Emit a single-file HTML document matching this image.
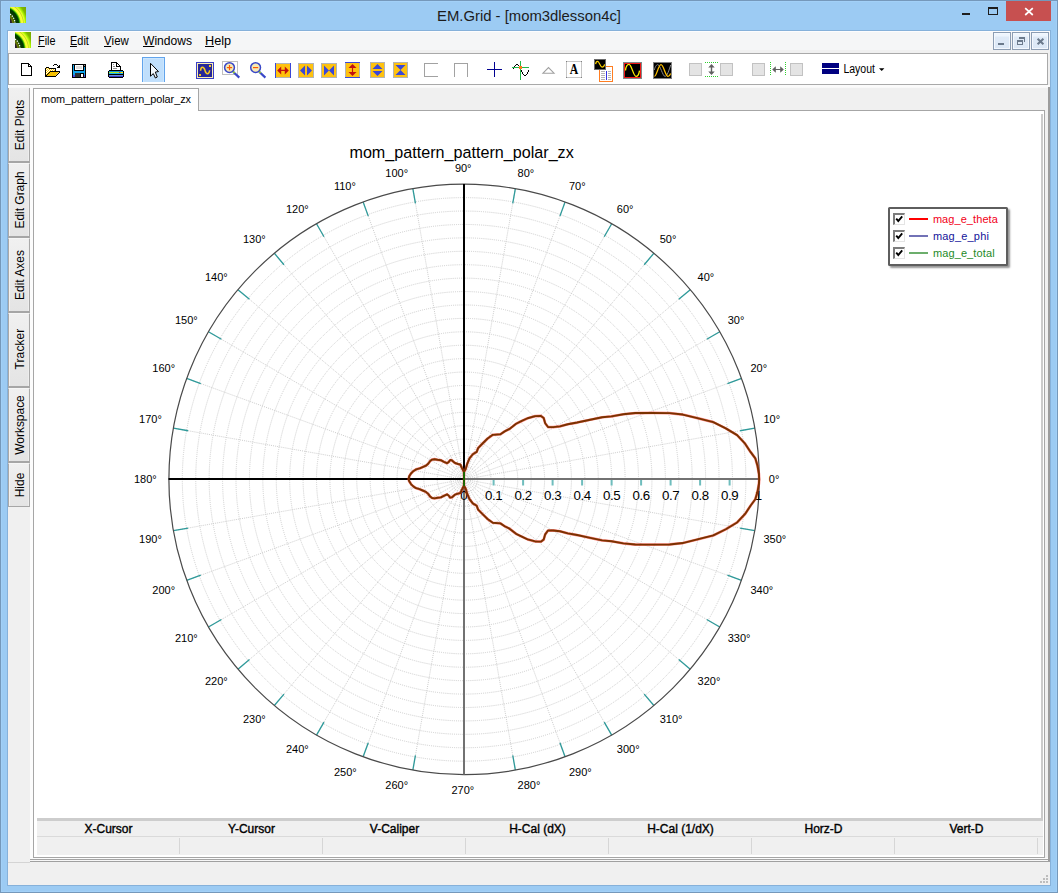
<!DOCTYPE html>
<html>
<head>
<meta charset="utf-8">
<title>EM.Grid - [mom3dlesson4c]</title>
<style>
html,body{margin:0;padding:0;}
body{width:1058px;height:893px;overflow:hidden;position:relative;background:#9ccbf3;font-family:"Liberation Sans",sans-serif;font-size:12px;color:#000;}
div,span,svg{box-sizing:border-box;}
.abs{position:absolute;}
#frame{position:absolute;left:0;top:0;width:1058px;height:893px;border:1px solid #7598ba;box-shadow:inset 0 0 0 1px #a2d0f7;}
#client{position:absolute;left:8px;top:31px;width:1042px;height:854px;background:#f0f0f0;}
#title{position:absolute;left:0;top:4.5px;width:1058px;text-align:center;font-size:14.85px;line-height:22px;color:#1c1c1c;}
#closebtn{position:absolute;left:1006px;top:1px;width:45px;height:20px;background:#c75050;}
#menubar{position:absolute;left:8px;top:31px;width:1042px;height:19px;background:#f5f6f7;box-shadow:inset 1px 1px 0 #fdfdfe;}
.menu{position:absolute;top:33px;font-size:12.7px;line-height:16px;color:#000;transform-origin:left center;white-space:nowrap;}
.menu u{text-decoration:none;display:inline-block;height:13px;border-bottom:1px solid #000;}
.mdib{position:absolute;top:32px;width:18px;height:18px;background:linear-gradient(#eef5fd 0,#eef5fd 3px,#dfeaf7 4px,#dce8f6 100%);border:1px solid #8c9db3;box-shadow:inset 0 0 0 1px #f3f8fe;}
#toolbar{position:absolute;left:8px;top:53px;width:1040px;height:32px;background:#fff;border:1px solid #a9a9a9;border-width:1px 1px 1px 1px;}
.vtab{position:absolute;left:8px;width:22px;background:linear-gradient(to bottom,#f0f0f0,#e4e4e4);border-top:1px solid #f6f6f6;border-right:1px solid #a9a9a9;border-bottom:2px solid #a6a6a6;border-left:1px solid #a9a9a9;box-shadow:inset 1px 0 0 #f2f2f2,inset -1px 0 0 #ededed;}
.vtab span{position:absolute;left:calc(50% + 0.3px);top:50%;white-space:nowrap;font-size:13.5px;letter-spacing:0px;transform:translate(-50%,-50%) rotate(-90deg) scaleX(0.885);}
#tabpage{position:absolute;left:33px;top:110px;width:1012px;height:748px;background:#fff;border:1px solid #a6a6a6;}
#tab{position:absolute;left:33px;top:88px;width:166px;height:23px;background:#fff;border:1px solid #a6a6a6;border-bottom:none;}
#tab span{position:absolute;left:7px;top:3px;font-size:10.9px;letter-spacing:-0.05px;line-height:14px;white-space:nowrap;}
#stat{position:absolute;left:37px;top:818px;width:1006px;height:37px;background:#f0f0f0;}
.sh{position:absolute;top:822px;height:15px;font-size:12px;font-weight:normal;-webkit-text-stroke:0.38px #000;text-align:center;line-height:15px;white-space:nowrap;}
.sh span{display:inline-block;}
.sd{position:absolute;top:838px;width:1px;height:16px;background:#d6d6d6;}
#legend{position:absolute;left:888px;top:207px;width:120px;height:59px;background:#fff;border:2px solid #5e5e5e;border-radius:1.5px;box-shadow:2px 2px 2px rgba(0,0,0,0.42);}
.lg{position:absolute;left:42.9px;font-size:11px;line-height:13px;white-space:nowrap;}
.cb{position:absolute;left:3px;width:12px;height:12px;background:#fff;border-top:2px solid #7c7c7c;border-left:2px solid #7c7c7c;border-right:1px solid #e4e4e4;border-bottom:1px solid #e4e4e4;}
.cb svg{position:absolute;left:0;top:0;}
.ln{position:absolute;left:19px;width:19px;height:2px;}
</style>
</head>
<body>
<div id="frame"></div>
<div id="title">EM.Grid - [mom3dlesson4c]</div>
<div id="closebtn"></div>
<svg class="abs" style="left:10px;top:7px" width="16" height="16" viewBox="0 0 16 16">
<defs><radialGradient id="aga" gradientUnits="userSpaceOnUse" cx="-8" cy="17.2" r="30">
<stop offset="0.32" stop-color="#2a2030"/><stop offset="0.36" stop-color="#6a7a08"/><stop offset="0.41" stop-color="#4a6a00"/>
<stop offset="0.455" stop-color="#0a3c00"/><stop offset="0.55" stop-color="#003800"/><stop offset="0.575" stop-color="#0a6a00"/>
<stop offset="0.60" stop-color="#58c800"/><stop offset="0.635" stop-color="#f0ff30"/><stop offset="0.685" stop-color="#ffff38"/>
<stop offset="0.715" stop-color="#c4de20"/><stop offset="0.745" stop-color="#eaff30"/><stop offset="0.79" stop-color="#a8f400"/>
<stop offset="0.85" stop-color="#80b800"/><stop offset="1" stop-color="#74a400"/></radialGradient></defs>
<rect width="16" height="16" fill="url(#aga)"/>
<circle cx="-8" cy="17.2" r="13.1" fill="none" stroke="#ffffff" stroke-width="1.25" stroke-dasharray="1.3 1.2"/>
</svg>
<div class="abs" style="left:962px;top:13px;width:8px;height:2px;background:#1e1e1e"></div>
<div class="abs" style="left:988px;top:7px;width:10px;height:8px;border:1px solid #1e1e1e;border-top-width:2px"></div>
<svg class="abs" style="left:1023px;top:6px" width="12" height="12" viewBox="1023 6 12 12"><path d="M1025.2 8.2 L1032.8 15 M1032.8 8.2 L1025.2 15" stroke="#fff" stroke-width="1.7" fill="none"/></svg>
<div class="abs" style="left:7px;top:30px;width:1044px;height:856px;border:1px solid #86b1da"></div>
<div id="client"></div>
<div id="menubar"></div>
<div class="menu" style="left:38px;transform:scaleX(0.854)"><u>F</u>ile</div>
<div class="menu" style="left:69.5px;transform:scaleX(0.862)"><u>E</u>dit</div>
<div class="menu" style="left:104px;transform:scaleX(0.90)"><u>V</u>iew</div>
<div class="menu" style="left:143px;transform:scaleX(0.954)"><u>W</u>indows</div>
<div class="menu" style="left:205px;transform:scaleX(1.0)"><u>H</u>elp</div>
<div class="mdib" style="left:993px"></div>
<div class="mdib" style="left:1012px"></div>
<div class="mdib" style="left:1031px"></div>
<svg class="abs" style="left:15px;top:32px" width="16" height="16" viewBox="0 0 16 16">
<defs><radialGradient id="agb" gradientUnits="userSpaceOnUse" cx="-8" cy="17.2" r="30">
<stop offset="0.32" stop-color="#2a2030"/><stop offset="0.36" stop-color="#6a7a08"/><stop offset="0.41" stop-color="#4a6a00"/>
<stop offset="0.455" stop-color="#0a3c00"/><stop offset="0.55" stop-color="#003800"/><stop offset="0.575" stop-color="#0a6a00"/>
<stop offset="0.60" stop-color="#58c800"/><stop offset="0.635" stop-color="#f0ff30"/><stop offset="0.685" stop-color="#ffff38"/>
<stop offset="0.715" stop-color="#c4de20"/><stop offset="0.745" stop-color="#eaff30"/><stop offset="0.79" stop-color="#a8f400"/>
<stop offset="0.85" stop-color="#80b800"/><stop offset="1" stop-color="#74a400"/></radialGradient></defs>
<rect width="16" height="16" fill="url(#agb)"/>
<circle cx="-8" cy="17.2" r="13.1" fill="none" stroke="#ffffff" stroke-width="1.25" stroke-dasharray="1.3 1.2"/>
</svg>
<div class="abs" style="left:998px;top:43px;width:6px;height:2px;background:#6b7a8c"></div>
<div class="abs" style="left:1019px;top:37px;width:6px;height:5px;border-top:2px solid #6b7a8c;border-right:1px solid #6b7a8c"></div>
<div class="abs" style="left:1017px;top:40px;width:6px;height:5px;border:1px solid #6b7a8c;border-top-width:2px;background:#dfeaf7"></div>
<svg class="abs" style="left:1035px;top:36px" width="11" height="11" viewBox="1035 36 11 11"><path d="M1037.6 38.7 L1043.4 44.3 M1043.4 38.7 L1037.6 44.3" stroke="#6b7a8c" stroke-width="2" fill="none"/></svg>
<div id="toolbar"></div>
<svg class="abs" style="left:8px;top:53px" width="1040" height="32" viewBox="8 53 1040 32">
<g shape-rendering="crispEdges"><path d="M21.5 63.5 H28.5 L31.5 66.5 V75.5 H21.5 Z" fill="#fff" stroke="#000" stroke-width="1"/><path d="M28.5 63.5 V66.5 H31.5" fill="none" stroke="#000" stroke-width="1"/></g>
<defs><pattern id="chk" x="0" y="0" width="2" height="2" patternUnits="userSpaceOnUse"><rect width="2" height="2" fill="#fff"/><rect width="1" height="1" fill="#f8c400"/><rect x="1" y="1" width="1" height="1" fill="#f8c400"/></pattern></defs>
<g shape-rendering="crispEdges">
<path d="M46 68 H49 L49 69 H55 V72 H50 L46 76 Z" fill="url(#chk)"/>
<rect x="45" y="68" width="1" height="9" fill="#000"/><rect x="46" y="67" width="3" height="1" fill="#000"/><rect x="49" y="68" width="7" height="1" fill="#000"/><rect x="55" y="69" width="1" height="2" fill="#000"/>
<rect x="45" y="76" width="11" height="1" fill="#000"/>
</g>
<path d="M46.3 76 L50.2 71.5 H59.5 L55.5 76 Z" fill="#f5c000"/>
<g shape-rendering="crispEdges" fill="#000"><rect x="50" y="71" width="10" height="1"/><rect x="59" y="72" width="1" height="1"/><rect x="58" y="73" width="1" height="1"/><rect x="57" y="74" width="1" height="1"/><rect x="56" y="75" width="1" height="1"/>
<rect x="49" y="72" width="1" height="1"/><rect x="48" y="73" width="1" height="1"/><rect x="47" y="74" width="1" height="1"/><rect x="46" y="75" width="1" height="1"/>
<rect x="54" y="64" width="3" height="1"/><rect x="53" y="65" width="1" height="1"/><rect x="57" y="65" width="1" height="1"/>
<rect x="59" y="65" width="1" height="3"/><rect x="58" y="66" width="1" height="2"/><rect x="57" y="67" width="1" height="1"/></g>
<g shape-rendering="crispEdges"><rect x="72" y="64" width="14" height="14" fill="#000"/>
<rect x="73" y="65" width="1" height="10" fill="#10a4ec"/><rect x="74" y="71" width="1" height="4" fill="#10a4ec"/><rect x="73" y="71" width="12" height="2" fill="#10a4ec"/><rect x="84" y="67" width="1" height="8" fill="#10a4ec"/>
<rect x="73" y="75" width="2" height="2" fill="#4a4ae4"/><rect x="84" y="75" width="1" height="2" fill="#4a4ae4"/><rect x="84" y="65" width="1" height="1" fill="#909090"/>
<rect x="75" y="65" width="8" height="5" fill="#fff"/><rect x="76" y="66" width="6" height="3" fill="#dcdcdc"/>
<rect x="75" y="73" width="5" height="4" fill="#303030"/><rect x="81" y="74" width="2" height="3" fill="#fff"/></g>
<g shape-rendering="crispEdges">
<path d="M112 70 V63 H116 L120 67 V70 Z" fill="#fff"/>
<rect x="111" y="62" width="1" height="8" fill="#000"/><rect x="111" y="62" width="6" height="1" fill="#000"/><rect x="117" y="63" width="1" height="1" fill="#000"/><rect x="118" y="64" width="1" height="1" fill="#000"/><rect x="119" y="65" width="1" height="1" fill="#000"/><rect x="120" y="66" width="1" height="4" fill="#000"/>
<rect x="116" y="63" width="1" height="3" fill="#000"/><rect x="116" y="66" width="4" height="1" fill="#000"/><rect x="117" y="64" width="1" height="2" fill="#fff"/><rect x="118" y="65" width="1" height="1" fill="#fff"/>
<rect x="113" y="64" width="1" height="1" fill="#909090"/><rect x="113" y="66" width="2" height="1" fill="#909090"/><rect x="113" y="68" width="4" height="1" fill="#909090"/>
<rect x="109" y="70" width="14" height="8" fill="#000"/><rect x="108" y="71" width="16" height="6" fill="#000"/>
<rect x="109" y="71" width="14" height="1" fill="#0c90e0"/><rect x="109" y="72" width="10" height="1" fill="#b0e820"/><rect x="119" y="72" width="1" height="1" fill="#f02820"/><rect x="120" y="72" width="1" height="1" fill="#ff9010"/><rect x="121" y="72" width="2" height="1" fill="#fff000"/>
<rect x="109" y="73" width="14" height="1" fill="#10b4f0"/><rect x="109" y="75" width="14" height="1" fill="#6890d8"/><rect x="109" y="76" width="14" height="1" fill="#3838c8"/></g>
<g shape-rendering="crispEdges"><rect x="142" y="57" width="23" height="25" fill="#62a4ec"/><rect x="143" y="58" width="21" height="24" fill="#cce6fd"/><rect x="144" y="59" width="19" height="23" fill="#c0dffc"/></g>
<path d="M150.5 63.3 L150.5 76.2 L153.3 73.6 L155.4 78 L157.3 77 L155.3 72.1 L158.5 71.6 Z" fill="#f2f8fe" stroke="#000" stroke-width="1" stroke-linejoin="miter"/>
<g shape-rendering="crispEdges"><rect x="196" y="62" width="18" height="17" fill="#3a40c8"/><rect x="197" y="63" width="16" height="15" fill="#fbeeb0"/><rect x="198" y="64" width="14" height="13" fill="#26269a"/>
<rect x="209" y="65" width="2" height="2" fill="#f8c820"/><rect x="199" y="74" width="2" height="2" fill="#f8c820"/></g>
<path d="M200.6 70.8 C200.8 66.2 203.8 66.2 205 70.5 C206.2 74.8 209.2 74.8 209.6 70.2" fill="none" stroke="#f8c820" stroke-width="1.5"/>
<rect x="222.5" y="61.5" width="15" height="13" fill="#fff" stroke="#c0c0c0" stroke-width="1" shape-rendering="crispEdges"/>
<path d="M233.1 71.8 L239.3 77.6" stroke="#3a48c8" stroke-width="2.2" fill="none"/>
<path d="M232.9 71.4 L234.5 73" stroke="#9ad820" stroke-width="1.6" fill="none"/>
<circle cx="229.5" cy="67.6" r="4.9" fill="#f6eab4" stroke="#3a48c8" stroke-width="1.5"/>
<rect x="226.9" y="67" width="5.2" height="1.2" fill="#ff5a00"/>
<rect x="228.9" y="65" width="1.2" height="5.2" fill="#ff5a00"/>
<path d="M259.2 71.8 L265.4 77.6" stroke="#3a48c8" stroke-width="2.2" fill="none"/>
<path d="M259.0 71.4 L260.6 73" stroke="#9ad820" stroke-width="1.6" fill="none"/>
<circle cx="255.6" cy="67.6" r="4.9" fill="#f6eab4" stroke="#3a48c8" stroke-width="1.5"/>
<rect x="253.0" y="67" width="5.2" height="1.2" fill="#ff5a00"/>
<g shape-rendering="crispEdges"><rect x="275" y="63" width="16" height="15" fill="#b4b4b4"/><rect x="276" y="64" width="14" height="13" fill="#ffc20e"/><rect x="275" y="63" width="1" height="15" fill="#3a48d8"/><rect x="290" y="63" width="1" height="15" fill="#3a48d8"/></g>
<path d="M277.2 70.4 L281.2 66.4 V69.85 H284.8 V66.4 L288.8 70.4 L284.8 74.4 V70.95 H281.2 V74.4 Z" fill="#c01010"/>
<g shape-rendering="crispEdges"><rect x="298" y="63" width="16" height="15" fill="#b4b4b4"/><rect x="299" y="64" width="14" height="13" fill="#ffc20e"/></g>
<path d="M300 70.4 L305 65.4 V75.4 Z M312 70.4 L307 65.4 V75.4 Z" fill="#3a48d8"/>
<g shape-rendering="crispEdges"><rect x="321" y="63" width="16" height="15" fill="#b4b4b4"/><rect x="322" y="64" width="14" height="13" fill="#ffc20e"/></g>
<path d="M324 65.4 L329 70.4 L324 75.4 Z M334 65.4 L329 70.4 L334 75.4 Z" fill="#3a48d8"/>
<g shape-rendering="crispEdges"><rect x="345" y="62" width="15" height="16" fill="#b4b4b4"/><rect x="346" y="63" width="13" height="14" fill="#ffc20e"/><rect x="345" y="62" width="15" height="1" fill="#3a48d8"/><rect x="345" y="77" width="15" height="1" fill="#3a48d8"/></g>
<path d="M352.5 64 L356.5 68 H353.05 V72 H356.5 L352.5 76 L348.5 72 H351.95 V68 H348.5 Z" fill="#c01010"/>
<g shape-rendering="crispEdges"><rect x="370" y="62" width="15" height="16" fill="#b4b4b4"/><rect x="371" y="63" width="13" height="14" fill="#ffc20e"/></g>
<path d="M377.5 64 L382.5 69 H372.5 Z M377.5 76 L382.5 71 H372.5 Z" fill="#3a48d8"/>
<g shape-rendering="crispEdges"><rect x="393" y="62" width="15" height="16" fill="#b4b4b4"/><rect x="394" y="63" width="13" height="14" fill="#ffc20e"/></g>
<path d="M395.5 65 H405.5 L400.5 70 Z M395.5 75 H405.5 L400.5 70 Z" fill="#3a48d8"/>
<g shape-rendering="crispEdges" fill="none" stroke="#a2a2a2" stroke-width="1"><path d="M438 63.5 H424.5 V76.5 H438"/><path d="M454.5 77 V63.5 H467.5 V77"/></g>
<g shape-rendering="crispEdges" fill="#000090"><rect x="487" y="69" width="15" height="1"/><rect x="494" y="62" width="1" height="15"/></g>
<g shape-rendering="crispEdges" fill="#22b848"><rect x="520" y="61" width="1" height="19"/><rect x="512" y="67" width="17" height="1"/></g>
<g shape-rendering="crispEdges" fill="#000"><rect x="513" y="68" width="1" height="1"/><rect x="514" y="66" width="1" height="1"/><rect x="515" y="65" width="1" height="1"/><rect x="516" y="64" width="2" height="1"/><rect x="518" y="65" width="1" height="1"/><rect x="521" y="70" width="1" height="2"/><rect x="522" y="72" width="1" height="2"/><rect x="523" y="74" width="1" height="1"/><rect x="524" y="75" width="2" height="1"/><rect x="526" y="74" width="1" height="1"/><rect x="527" y="72" width="1" height="2"/><rect x="528" y="70" width="1" height="2"/></g>
<rect x="519" y="66" width="3" height="3" fill="#ff7a18" shape-rendering="crispEdges"/>
<path d="M543 73.2 L548.5 67.6 L554 73.2 Z" fill="#fff" stroke="#a0a0a0" stroke-width="1.1"/>
<g shape-rendering="crispEdges"><rect x="566" y="61" width="16" height="17" fill="#c6c6c6"/><rect x="567" y="62" width="14" height="15" fill="#fff"/>
<rect x="566" y="61" width="1" height="1" fill="#808080"/><rect x="581" y="61" width="1" height="1" fill="#808080"/><rect x="566" y="77" width="1" height="1" fill="#808080"/><rect x="581" y="77" width="1" height="1" fill="#808080"/></g>
<text transform="translate(574 74) scale(0.84 1)" x="0" y="0" font-family="Liberation Serif, serif" font-weight="bold" font-size="14px" text-anchor="middle" fill="#000">A</text>
<g shape-rendering="crispEdges"><rect x="599" y="66" width="14" height="16" fill="#ff7e22"/><rect x="600" y="67" width="12" height="14" fill="#fff"/>
<rect x="601" y="71" width="4" height="1" fill="#b4b4b4"/><rect x="608" y="71" width="3" height="1" fill="#b4b4b4"/>
<rect x="601" y="73" width="4" height="1" fill="#b4b4b4"/><rect x="608" y="73" width="3" height="1" fill="#b4b4b4"/>
<rect x="601" y="75" width="4" height="1" fill="#b4b4b4"/><rect x="608" y="75" width="3" height="1" fill="#b4b4b4"/>
<rect x="601" y="77" width="4" height="1" fill="#b4b4b4"/><rect x="608" y="77" width="3" height="1" fill="#b4b4b4"/>
<rect x="601" y="79" width="4" height="1" fill="#b4b4b4"/><rect x="608" y="79" width="3" height="1" fill="#b4b4b4"/>
<rect x="606" y="71" width="1" height="9" fill="#3434e0"/>
<rect x="594" y="59" width="12" height="11" fill="#6a6a6a"/><rect x="595" y="60" width="10" height="9" fill="#000"/></g>
<path d="M595.6 64.2 C596 62 596.8 61.4 597.6 61.4 C599.2 61.4 600.4 67.2 602.1 67.2 C603.4 67.2 604.2 66 604.6 64.4" fill="none" stroke="#ffd400" stroke-width="1.2"/>
<g shape-rendering="crispEdges"><rect x="623" y="62" width="19" height="17" fill="#7e8a8a"/><rect x="624" y="63" width="17" height="15" fill="#ee1818"/><rect x="625" y="64" width="15" height="13" fill="#000"/></g>
<path d="M625.5 70.5 C626 66 627.5 64.4 629 64.4 C631.6 64.4 633.4 76.4 636 76.4 C637.6 76.4 639 74 639.5 70.6" fill="none" stroke="#fff000" stroke-width="1.3"/>
<g shape-rendering="crispEdges"><rect x="653" y="62" width="19" height="17" fill="#808080"/><rect x="654" y="63" width="17" height="15" fill="#000"/></g>
<path d="M654.2 70 C655.5 66 656.6 64.6 657.8 64.6 C660 64.6 662.8 76.4 665 76.4 C667.2 76.4 669 70 670.7 65" fill="none" stroke="#8c8c8c" stroke-width="1"/>
<path d="M654.4 76.4 C656.6 76.4 658.4 64.6 661 64.6 C663.6 64.6 665.4 76.4 668 76.4 C669.2 76.4 670 75 670.6 73.4" fill="none" stroke="#ffc000" stroke-width="1.3"/>
<rect x="689.5" y="63.5" width="12" height="12" fill="#e4e4e4" stroke="#c2c2c2" stroke-width="1" shape-rendering="crispEdges"/>
<rect x="720.5" y="63.5" width="12" height="12" fill="#e4e4e4" stroke="#c2c2c2" stroke-width="1" shape-rendering="crispEdges"/>
<rect x="752.5" y="63.5" width="12" height="12" fill="#e4e4e4" stroke="#c2c2c2" stroke-width="1" shape-rendering="crispEdges"/>
<rect x="790.5" y="63.5" width="12" height="12" fill="#e4e4e4" stroke="#c2c2c2" stroke-width="1" shape-rendering="crispEdges"/>
<g shape-rendering="crispEdges" stroke="#30d030" stroke-width="1" stroke-dasharray="1 1"><path d="M705 62.5 H718"/><path d="M705 76.5 H718"/></g>
<path d="M711.5 64 L714.7 67.6 H712.2 V71.4 H714.7 L711.5 75 L708.3 71.4 H710.8 V67.6 H708.3 Z" fill="#606060"/>
<g shape-rendering="crispEdges" stroke="#30d030" stroke-width="1" stroke-dasharray="1 1"><path d="M770.5 62 V76"/><path d="M785.5 62 V76"/></g>
<path d="M772.2 69.5 L775.8 66.3 V68.9 H780.2 V66.3 L783.8 69.5 L780.2 72.7 V70.1 H775.8 V72.7 Z" fill="#606060"/>
<g shape-rendering="crispEdges"><rect x="822" y="63" width="17" height="11" fill="#000080"/><rect x="822" y="68" width="17" height="1" fill="#fff"/></g>
<text x="843.4" y="73.2" font-family="Liberation Sans, sans-serif" font-size="12px" fill="#000" textLength="31.6" lengthAdjust="spacingAndGlyphs">Layout</text>
<path d="M879 68.2 H884.4 L881.7 71 Z" fill="#000"/>
</svg>
<div class="vtab" style="top:87px;height:76px;border-top-color:#bdbdbd"><span>Edit Plots</span></div>
<div class="vtab" style="top:163px;height:75px"><span>Edit Graph</span></div>
<div class="vtab" style="top:238px;height:75px"><span>Edit Axes</span></div>
<div class="vtab" style="top:313px;height:75px"><span style="margin-top:-1px;letter-spacing:0.15px">Tracker</span></div>
<div class="vtab" style="top:388px;height:75px"><span>Workspace</span></div>
<div class="vtab" style="top:463px;height:44px;border-bottom-width:1px"><span>Hide</span></div>
<div class="abs" style="left:8px;top:85px;width:1042px;height:3px;background:linear-gradient(#fbfbfb 0,#fbfbfb 2px,#f6f6f6 3px)"></div>
<div class="abs" style="left:30px;top:87px;width:3px;height:773px;background:#fcfcfc"></div>
<div class="abs" style="left:30px;top:858px;width:1018px;height:1px;background:#fcfcfc"></div>
<div class="abs" style="left:30px;top:859px;width:1018px;height:1px;background:#a4a4a4"></div>
<div class="abs" style="left:30px;top:860px;width:1018px;height:1px;background:#f7f7f7"></div>
<div class="abs" style="left:1048px;top:87px;width:2px;height:775px;background:#9c9c9c"></div>
<div class="abs" style="left:30px;top:861px;width:1020px;height:1px;background:#a0a0a0"></div>
<div id="tabpage"></div>
<div id="tab"><span>mom_pattern_pattern_polar_zx</span></div>
<svg id="plot" width="1006" height="725" viewBox="36 91 1006 725" style="position:absolute;left:36px;top:91px">
<g fill="none" stroke="#cdcdcd" stroke-width="1" stroke-dasharray="1 1.1">
<circle cx="464.1" cy="479.4" r="13.42"/>
<circle cx="464.1" cy="479.4" r="26.84"/>
<circle cx="464.1" cy="479.4" r="40.25"/>
<circle cx="464.1" cy="479.4" r="53.67"/>
<circle cx="464.1" cy="479.4" r="67.09"/>
<circle cx="464.1" cy="479.4" r="80.51"/>
<circle cx="464.1" cy="479.4" r="93.93"/>
<circle cx="464.1" cy="479.4" r="107.35"/>
<circle cx="464.1" cy="479.4" r="120.76"/>
<circle cx="464.1" cy="479.4" r="134.18"/>
<circle cx="464.1" cy="479.4" r="147.6"/>
<circle cx="464.1" cy="479.4" r="161.02"/>
<circle cx="464.1" cy="479.4" r="174.44"/>
<circle cx="464.1" cy="479.4" r="187.85"/>
<circle cx="464.1" cy="479.4" r="201.27"/>
<circle cx="464.1" cy="479.4" r="214.69"/>
<circle cx="464.1" cy="479.4" r="228.11"/>
<circle cx="464.1" cy="479.4" r="241.53"/>
<circle cx="464.1" cy="479.4" r="254.95"/>
<circle cx="464.1" cy="479.4" r="268.36"/>
<circle cx="464.1" cy="479.4" r="281.78"/>
</g>
<g stroke="#cdcdcd" stroke-width="1" stroke-dasharray="1 1.1">
<line x1="468.04" y1="478.71" x2="754.82" y2="428.14"/>
<line x1="467.86" y1="478.03" x2="741.5" y2="378.44"/>
<line x1="467.56" y1="477.4" x2="719.75" y2="331.8"/>
<line x1="467.16" y1="476.83" x2="690.24" y2="289.65"/>
<line x1="466.67" y1="476.34" x2="653.85" y2="253.26"/>
<line x1="466.1" y1="475.94" x2="611.7" y2="223.75"/>
<line x1="465.47" y1="475.64" x2="565.06" y2="202"/>
<line x1="464.79" y1="475.46" x2="515.36" y2="188.68"/>
<line x1="463.41" y1="475.46" x2="412.84" y2="188.68"/>
<line x1="462.73" y1="475.64" x2="363.14" y2="202"/>
<line x1="462.1" y1="475.94" x2="316.5" y2="223.75"/>
<line x1="461.53" y1="476.34" x2="274.35" y2="253.26"/>
<line x1="461.04" y1="476.83" x2="237.96" y2="289.65"/>
<line x1="460.64" y1="477.4" x2="208.45" y2="331.8"/>
<line x1="460.34" y1="478.03" x2="186.7" y2="378.44"/>
<line x1="460.16" y1="478.71" x2="173.38" y2="428.14"/>
<line x1="460.16" y1="480.09" x2="173.38" y2="530.66"/>
<line x1="460.34" y1="480.77" x2="186.7" y2="580.36"/>
<line x1="460.64" y1="481.4" x2="208.45" y2="627"/>
<line x1="461.04" y1="481.97" x2="237.96" y2="669.15"/>
<line x1="461.53" y1="482.46" x2="274.35" y2="705.54"/>
<line x1="462.1" y1="482.86" x2="316.5" y2="735.05"/>
<line x1="462.73" y1="483.16" x2="363.14" y2="756.8"/>
<line x1="463.41" y1="483.34" x2="412.84" y2="770.12"/>
<line x1="464.79" y1="483.34" x2="515.36" y2="770.12"/>
<line x1="465.47" y1="483.16" x2="565.06" y2="756.8"/>
<line x1="466.1" y1="482.86" x2="611.7" y2="735.05"/>
<line x1="466.67" y1="482.46" x2="653.85" y2="705.54"/>
<line x1="467.16" y1="481.97" x2="690.24" y2="669.15"/>
<line x1="467.56" y1="481.4" x2="719.75" y2="627"/>
<line x1="467.86" y1="480.77" x2="741.5" y2="580.36"/>
<line x1="468.04" y1="480.09" x2="754.82" y2="530.66"/>
</g>
<g stroke="#2e9a9a" stroke-width="1.3">
<line x1="740.04" y1="430.74" x2="754.82" y2="428.14"/>
<line x1="727.4" y1="383.57" x2="741.5" y2="378.44"/>
<line x1="706.76" y1="339.3" x2="719.75" y2="331.8"/>
<line x1="678.75" y1="299.29" x2="690.24" y2="289.65"/>
<line x1="644.21" y1="264.75" x2="653.85" y2="253.26"/>
<line x1="604.2" y1="236.74" x2="611.7" y2="223.75"/>
<line x1="559.93" y1="216.1" x2="565.06" y2="202"/>
<line x1="512.76" y1="203.46" x2="515.36" y2="188.68"/>
<line x1="415.44" y1="203.46" x2="412.84" y2="188.68"/>
<line x1="368.27" y1="216.1" x2="363.14" y2="202"/>
<line x1="324" y1="236.74" x2="316.5" y2="223.75"/>
<line x1="283.99" y1="264.75" x2="274.35" y2="253.26"/>
<line x1="249.45" y1="299.29" x2="237.96" y2="289.65"/>
<line x1="221.44" y1="339.3" x2="208.45" y2="331.8"/>
<line x1="200.8" y1="383.57" x2="186.7" y2="378.44"/>
<line x1="188.16" y1="430.74" x2="173.38" y2="428.14"/>
<line x1="188.16" y1="528.06" x2="173.38" y2="530.66"/>
<line x1="200.8" y1="575.23" x2="186.7" y2="580.36"/>
<line x1="221.44" y1="619.5" x2="208.45" y2="627"/>
<line x1="249.45" y1="659.51" x2="237.96" y2="669.15"/>
<line x1="283.99" y1="694.05" x2="274.35" y2="705.54"/>
<line x1="324" y1="722.06" x2="316.5" y2="735.05"/>
<line x1="368.27" y1="742.7" x2="363.14" y2="756.8"/>
<line x1="415.44" y1="755.34" x2="412.84" y2="770.12"/>
<line x1="512.76" y1="755.34" x2="515.36" y2="770.12"/>
<line x1="559.93" y1="742.7" x2="565.06" y2="756.8"/>
<line x1="604.2" y1="722.06" x2="611.7" y2="735.05"/>
<line x1="644.21" y1="694.05" x2="653.85" y2="705.54"/>
<line x1="678.75" y1="659.51" x2="690.24" y2="669.15"/>
<line x1="706.76" y1="619.5" x2="719.75" y2="627"/>
<line x1="727.4" y1="575.23" x2="741.5" y2="580.36"/>
<line x1="740.04" y1="528.06" x2="754.82" y2="530.66"/>
</g>
<circle cx="464.1" cy="479.4" r="295.2" fill="none" stroke="#4a4a4a" stroke-width="1.2"/>
<rect x="463" y="478" width="296.5" height="2" fill="#727272"/>
<rect x="463" y="478" width="2" height="296.5" fill="#727272"/>
<rect x="168.5" y="478" width="296.5" height="2" fill="#000"/>
<rect x="463" y="184" width="2" height="296" fill="#000"/>
<g fill="#6fbdbd">
<rect x="492.6" y="480" width="2" height="5.5"/>
<rect x="522.1" y="480" width="2" height="5.5"/>
<rect x="551.6" y="480" width="2" height="5.5"/>
<rect x="581.1" y="480" width="2" height="5.5"/>
<rect x="610.6" y="480" width="2" height="5.5"/>
<rect x="640.1" y="480" width="2" height="5.5"/>
<rect x="669.6" y="480" width="2" height="5.5"/>
<rect x="699.1" y="480" width="2" height="5.5"/>
<rect x="728.6" y="480" width="2" height="5.5"/>
</g>
<g font-family="Liberation Sans, sans-serif" font-size="13.3px" fill="#000" text-anchor="middle" letter-spacing="-0.35">
<text x="463.8" y="499.6">0</text>
<text x="493.6" y="499.6">0.1</text>
<text x="523.1" y="499.6">0.2</text>
<text x="552.6" y="499.6">0.3</text>
<text x="582.1" y="499.6">0.4</text>
<text x="611.6" y="499.6">0.5</text>
<text x="641.1" y="499.6">0.6</text>
<text x="670.6" y="499.6">0.7</text>
<text x="700.1" y="499.6">0.8</text>
<text x="729.6" y="499.6">0.9</text>
<text x="758.3" y="499.6">1</text>
</g>
<path d="M464 479 L464 471.85 L465.7 468.95 L467.1 464.15 L469.5 458.45 L472.8 454.25 L476.7 451.85 L478.1 448.05 L482.8 443.25 L487.6 438.55 L492.8 434.85 L500.4 434.25 L504.7 431.35 L509.5 428.95 L516.1 423.75 L521.8 420.95 L527.6 418.25 L535.2 416.15 L540.9 415.95 L543.7 418.05 L545.2 423.25 L548 427.05 L553.2 427.15 L559.9 426.35 L567.8 424.25 L577.1 422.55 L589 419.95 L602.2 417.25 L611.5 416.35 L623.4 414.25 L635.3 413.05 L652.5 412.95 L669.7 413.15 L682.7 414.55 L697.4 418.15 L713.3 422.15 L725.8 428.35 L737.1 435.15 L745.1 443.65 L750.7 452.15 L755.3 458.35 L757.5 465.75 L758.9 473.75 L759.2 479.45 L758.9 483.85 L757.5 491.85 L755.3 499.25 L750.7 505.45 L745.1 513.95 L737.1 522.45 L725.8 529.25 L713.3 535.45 L697.4 539.45 L682.7 543.05 L669.7 544.45 L652.5 544.65 L635.3 544.55 L623.4 543.35 L611.5 541.25 L602.2 540.35 L589 537.65 L577.1 535.05 L567.8 533.35 L559.9 531.25 L553.2 530.45 L548 530.55 L545.2 534.35 L543.7 539.55 L540.9 541.65 L535.2 541.45 L527.6 539.35 L521.8 536.65 L516.1 533.85 L509.5 528.65 L504.7 526.25 L500.4 523.35 L492.8 522.75 L487.6 519.05 L482.8 514.35 L478.1 509.55 L476.7 505.75 L472.8 503.35 L469.5 499.15 L467.1 493.45 L465.7 488.65 L464 485.75 L464 479 L463.9 471.9 L461.9 468 L460.3 464.5 L458 464 L454.9 462.9 L451.7 460.2 L450.2 460 L448.6 462.1 L447 463.2 L443.9 461.8 L440.8 460.2 L437.6 459.8 L434.5 459.2 L432.1 459.6 L430.2 461 L428.2 463.7 L425.9 465.7 L422.7 467.1 L419.6 468.4 L416.1 469.4 L413.3 471.2 L411 473.5 L409.2 476.3 L408.6 479.3 L409.2 481.3 L411 484.1 L413.3 486.4 L416.1 488.2 L419.6 489.2 L422.7 490.5 L425.9 491.9 L428.2 493.9 L430.2 496.6 L432.1 498 L434.5 498.4 L437.6 497.8 L440.8 497.4 L443.9 495.8 L447 494.4 L448.6 495.5 L450.2 497.6 L451.7 497.4 L454.9 494.7 L458 493.6 L460.3 493.1 L461.9 489.6 L463.9 485.7 L464 479" fill="none" stroke="#ff1a10" stroke-width="2.7" stroke-linejoin="round" stroke-opacity="0.5"/>
<path d="M464 476 V482" fill="none" stroke="#0000c0" stroke-width="1.4"/>
<path d="M464 479 L464 471.85 L465.7 468.95 L467.1 464.15 L469.5 458.45 L472.8 454.25 L476.7 451.85 L478.1 448.05 L482.8 443.25 L487.6 438.55 L492.8 434.85 L500.4 434.25 L504.7 431.35 L509.5 428.95 L516.1 423.75 L521.8 420.95 L527.6 418.25 L535.2 416.15 L540.9 415.95 L543.7 418.05 L545.2 423.25 L548 427.05 L553.2 427.15 L559.9 426.35 L567.8 424.25 L577.1 422.55 L589 419.95 L602.2 417.25 L611.5 416.35 L623.4 414.25 L635.3 413.05 L652.5 412.95 L669.7 413.15 L682.7 414.55 L697.4 418.15 L713.3 422.15 L725.8 428.35 L737.1 435.15 L745.1 443.65 L750.7 452.15 L755.3 458.35 L757.5 465.75 L758.9 473.75 L759.2 479.45 L758.9 483.85 L757.5 491.85 L755.3 499.25 L750.7 505.45 L745.1 513.95 L737.1 522.45 L725.8 529.25 L713.3 535.45 L697.4 539.45 L682.7 543.05 L669.7 544.45 L652.5 544.65 L635.3 544.55 L623.4 543.35 L611.5 541.25 L602.2 540.35 L589 537.65 L577.1 535.05 L567.8 533.35 L559.9 531.25 L553.2 530.45 L548 530.55 L545.2 534.35 L543.7 539.55 L540.9 541.65 L535.2 541.45 L527.6 539.35 L521.8 536.65 L516.1 533.85 L509.5 528.65 L504.7 526.25 L500.4 523.35 L492.8 522.75 L487.6 519.05 L482.8 514.35 L478.1 509.55 L476.7 505.75 L472.8 503.35 L469.5 499.15 L467.1 493.45 L465.7 488.65 L464 485.75 L464 479 L463.9 471.9 L461.9 468 L460.3 464.5 L458 464 L454.9 462.9 L451.7 460.2 L450.2 460 L448.6 462.1 L447 463.2 L443.9 461.8 L440.8 460.2 L437.6 459.8 L434.5 459.2 L432.1 459.6 L430.2 461 L428.2 463.7 L425.9 465.7 L422.7 467.1 L419.6 468.4 L416.1 469.4 L413.3 471.2 L411 473.5 L409.2 476.3 L408.6 479.3 L409.2 481.3 L411 484.1 L413.3 486.4 L416.1 488.2 L419.6 489.2 L422.7 490.5 L425.9 491.9 L428.2 493.9 L430.2 496.6 L432.1 498 L434.5 498.4 L437.6 497.8 L440.8 497.4 L443.9 495.8 L447 494.4 L448.6 495.5 L450.2 497.6 L451.7 497.4 L454.9 494.7 L458 493.6 L460.3 493.1 L461.9 489.6 L463.9 485.7 L464 479" fill="none" stroke="#7a3200" stroke-width="1.9" stroke-linejoin="round"/>
<rect x="463.3" y="472" width="1.5" height="14" fill="#007800"/>
<g font-family="Liberation Sans, sans-serif" font-size="11px" fill="#000">
<text x="768.8" y="483">0°</text>
<text x="763.4" y="422.8">10°</text>
<text x="750.5" y="372.1">20°</text>
<text x="727.7" y="323.8">30°</text>
<text x="697.6" y="280.8">40°</text>
<text x="659.7" y="243.1">50°</text>
<text x="616.8" y="213">60°</text>
<text x="568.9" y="190.1">70°</text>
<text x="517.6" y="177.3">80°</text>
<text x="463.2" y="172.4" text-anchor="middle">90°</text>
<text x="385.3" y="177.3">100°</text>
<text x="333.9" y="190.4">110°</text>
<text x="286" y="213">120°</text>
<text x="243" y="243">130°</text>
<text x="204.9" y="281.1">140°</text>
<text x="174.9" y="324.1">150°</text>
<text x="152.3" y="371.8">160°</text>
<text x="139.1" y="423.1">170°</text>
<text x="134" y="483">180°</text>
<text x="139.1" y="542.9">190°</text>
<text x="152.3" y="594.2">200°</text>
<text x="174.9" y="641.9">210°</text>
<text x="204.9" y="684.9">220°</text>
<text x="243" y="723">230°</text>
<text x="286" y="753">240°</text>
<text x="333.9" y="775.6">250°</text>
<text x="385.3" y="788.7">260°</text>
<text x="462.8" y="794.4" text-anchor="middle">270°</text>
<text x="517.6" y="788.7">280°</text>
<text x="568.9" y="775.9">290°</text>
<text x="616.8" y="753">300°</text>
<text x="659.7" y="722.9">310°</text>
<text x="697.6" y="685.2">320°</text>
<text x="727.7" y="642.2">330°</text>
<text x="750.5" y="593.9">340°</text>
<text x="763.4" y="543.2">350°</text>
</g>
<text x="461.6" y="157.8" font-family="Liberation Sans, sans-serif" font-size="16.15px" fill="#000" text-anchor="middle">mom_pattern_pattern_polar_zx</text>
</svg>
<div id="legend">
  <div class="cb" style="top:4px"><svg width="9" height="9" viewBox="0 0 9 9"><path d="M1.2 3.6 L3.3 6 L7.2 1.4" fill="none" stroke="#000" stroke-width="1.9"/></svg></div>
  <div class="cb" style="top:21px"><svg width="9" height="9" viewBox="0 0 9 9"><path d="M1.2 3.6 L3.3 6 L7.2 1.4" fill="none" stroke="#000" stroke-width="1.9"/></svg></div>
  <div class="cb" style="top:38px"><svg width="9" height="9" viewBox="0 0 9 9"><path d="M1.2 3.6 L3.3 6 L7.2 1.4" fill="none" stroke="#000" stroke-width="1.9"/></svg></div>
  <div class="ln" style="top:9px;background:#ff0000"></div>
  <div class="ln" style="top:26px;background:#7272b6"></div>
  <div class="ln" style="top:43px;background:#6cae6c"></div>
  <div class="lg" style="top:3.8px;color:#f20018;letter-spacing:0.07px">mag_e_theta</div>
  <div class="lg" style="top:20.8px;color:#14149a;letter-spacing:0.2px">mag_e_phi</div>
  <div class="lg" style="top:37.8px;color:#1e8a28;letter-spacing:0.12px">mag_e_total</div>
</div>
<div id="stat"></div>
<div class="abs" style="left:37px;top:818px;width:1006px;height:3px;background:#cdcdcd"></div>
<div class="abs" style="left:37px;top:836px;width:1006px;height:1px;background:#dadada"></div>
<div class="sh" style="left:37px;width:143px"><span>X-Cursor</span></div>
<div class="sh" style="left:180px;width:143px"><span>Y-Cursor</span></div>
<div class="sh" style="left:323px;width:143px"><span>V-Caliper</span></div>
<div class="sh" style="left:466px;width:143px"><span>H-Cal (dX)</span></div>
<div class="sh" style="left:609px;width:143px"><span>H-Cal (1/dX)</span></div>
<div class="sh" style="left:752px;width:143px"><span>Horz-D</span></div>
<div class="sh" style="left:895px;width:143px"><span>Vert-D</span></div>
<div class="sd" style="left:179px"></div>
<div class="sd" style="left:322px"></div>
<div class="sd" style="left:465px"></div>
<div class="sd" style="left:608px"></div>
<div class="sd" style="left:751px"></div>
<div class="sd" style="left:894px"></div>
<div class="sd" style="left:1037px"></div>
<div class="abs" style="left:8px;top:862px;width:22px;height:1px;background:#d4d4d4"></div>
<div class="abs" style="left:1041px;top:114px;width:2px;height:706px;background:#cbcbcb"></div>
<div class="abs" style="left:1040px;top:881px;width:2px;height:2px;background:#bdbdbd"></div>
<div class="abs" style="left:1043px;top:881px;width:2px;height:2px;background:#bdbdbd"></div>
<div class="abs" style="left:1046px;top:881px;width:2px;height:2px;background:#bdbdbd"></div>
<div class="abs" style="left:1043px;top:878px;width:2px;height:2px;background:#bdbdbd"></div>
<div class="abs" style="left:1046px;top:878px;width:2px;height:2px;background:#bdbdbd"></div>
<div class="abs" style="left:1046px;top:875px;width:2px;height:2px;background:#bdbdbd"></div>

</body>
</html>
